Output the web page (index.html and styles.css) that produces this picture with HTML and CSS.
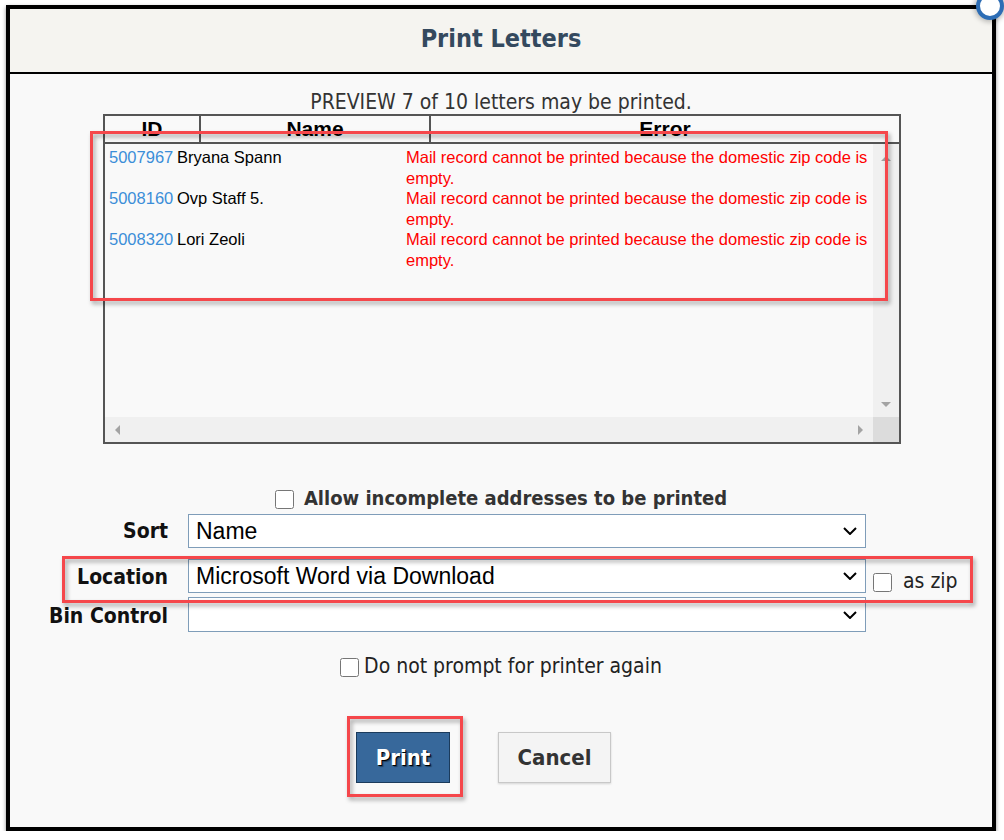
FILE: index.html
```html
<!DOCTYPE html>
<html lang="en">
<head>
  <meta charset="UTF-8">
  <meta name="viewport" content="width=device-width, initial-scale=1.0">
  <title>Print Letters</title>
  <link rel="stylesheet" href="styles.css">
</head>
<body>
  <div class="dialog">
    <div class="dialog-header">
      <h1>Print Letters</h1>
    </div>

    <div class="dialog-body">
      <p class="preview-note">PREVIEW 7 of 10 letters may be printed.</p>

      <!-- Letters that cannot be printed -->
      <div class="letter-table">
        <div class="letter-head">
          <div class="col-id">ID</div>
          <div class="col-name">Name</div>
          <div class="col-error">Error</div>
        </div>
        <div class="letter-scroll">
          <div class="letter-rows">
            <div class="letter-row">
              <a class="letter-id">5007967</a>
              <span class="letter-name">Bryana Spann</span>
              <span class="letter-error">Mail record cannot be printed because the domestic zip code is empty.</span>
            </div>
            <div class="letter-row">
              <a class="letter-id">5008160</a>
              <span class="letter-name">Ovp Staff 5.</span>
              <span class="letter-error">Mail record cannot be printed because the domestic zip code is empty.</span>
            </div>
            <div class="letter-row">
              <a class="letter-id">5008320</a>
              <span class="letter-name">Lori Zeoli</span>
              <span class="letter-error">Mail record cannot be printed because the domestic zip code is empty.</span>
            </div>
          </div>
          <div class="vscroll"><i class="arrow-up"></i><i class="arrow-down"></i></div>
          <div class="hscroll"><i class="arrow-left"></i><i class="arrow-right"></i></div>
          <div class="scroll-corner"></div>
        </div>
      </div>

      <label class="check-line allow">
        <input type="checkbox">
        <span>Allow incomplete addresses to be printed</span>
      </label>

      <div class="form-row row-sort">
        <span class="form-label">Sort</span>
        <div class="fake-select">
          <span>Name</span>
          <svg class="chevron" width="14" height="8" viewBox="0 0 14 8"><polyline points="1,1 7,7 13,1" fill="none" stroke="#000" stroke-width="2"/></svg>
        </div>
      </div>

      <div class="form-row row-location">
        <span class="form-label">Location</span>
        <div class="fake-select">
          <span>Microsoft Word via Download</span>
          <svg class="chevron" width="14" height="8" viewBox="0 0 14 8"><polyline points="1,1 7,7 13,1" fill="none" stroke="#000" stroke-width="2"/></svg>
        </div>
        <input type="checkbox" class="zip-check">
        <span class="zip-text">as zip</span>
      </div>

      <div class="form-row row-bin">
        <span class="form-label">Bin Control</span>
        <div class="fake-select">
          <span></span>
          <svg class="chevron" width="14" height="8" viewBox="0 0 14 8"><polyline points="1,1 7,7 13,1" fill="none" stroke="#000" stroke-width="2"/></svg>
        </div>
      </div>

      <label class="check-line prompt">
        <input type="checkbox">
        <span>Do not prompt for printer again</span>
      </label>

      <div class="button-row">
        <button class="btn btn-print">Print</button>
        <button class="btn btn-cancel">Cancel</button>
      </div>
    </div>

    <!-- red annotation boxes from the screenshot -->
    <div class="mark mark-table"></div>
    <div class="mark mark-location"></div>
    <div class="mark mark-print"></div>
  </div>

  <div class="close-btn"></div>
</body>
</html>
```

FILE: styles.css
```css
:root {
  --frame: #000;
  --grid-line: #555;
  --mark-red: #f5474b;
  --tahoma: "DejaVu Sans Condensed", "DejaVu Sans", sans-serif;
  --arial: "Liberation Sans", Arial, sans-serif;
}

html, body {
  margin: 0;
  padding: 0;
  background: #fff;
}

body {
  font-family: var(--tahoma);
  font-stretch: condensed;
  position: relative;
}

.dialog {
  position: relative;
  width: 990px;
  margin: 5px 0 0 6px;
  box-sizing: border-box;
  border: 4px solid var(--frame);
  background: #f9f9f9;
  box-shadow: 0 2px 4px rgba(0, 0, 0, 0.45);
}

.dialog-header {
  height: 63px;
  background: #f5f4f0;
  border-bottom: 2px solid var(--frame);
  text-align: center;
}

.dialog-header h1 {
  margin: 0;
  font-size: 25px;
  line-height: 60px;
  font-weight: bold;
  color: #34495e;
}

.dialog-body {
  padding: 16px 0 44px;
}

.preview-note {
  margin: 0;
  text-align: center;
  font-size: 21px;
  line-height: 24px;
  color: #333;
}

/* Table */
.letter-table {
  margin-left: 93px;
  width: 798px;
  box-sizing: border-box;
  border: 2px solid var(--grid-line);
  font-family: var(--arial);
  font-stretch: normal;
}

.letter-head {
  display: flex;
  height: 26px;
  border-bottom: 2px solid var(--grid-line);
  font-weight: bold;
  font-size: 21px;
  line-height: 26px;
  color: #000;
  text-align: center;
}

.col-id {
  width: 94px;
  border-right: 2px solid var(--grid-line);
}

.col-name {
  width: 228px;
  border-right: 2px solid var(--grid-line);
}

.col-error {
  flex: 1;
}

.letter-scroll {
  display: grid;
  grid-template-columns: 1fr 26px;
  grid-template-rows: 273px 25px;
}

.letter-rows {
  padding: 3px 0 0 4px;
  font-size: 16.5px;
  line-height: 20.5px;
  overflow: hidden;
}

.letter-row {
  display: flex;
}

.letter-id {
  flex: none;
  width: 68px;
  color: #3b8ed8;
}

.letter-name {
  flex: none;
  width: 229px;
  color: #000;
}

.letter-error {
  flex: none;
  width: 466px;
  color: #f00;
}

.vscroll {
  background: #f0f0f0;
  display: flex;
  flex-direction: column;
  justify-content: space-between;
  align-items: center;
  padding: 12px 0 10px;
}

.hscroll {
  background: #f0f0f0;
  display: flex;
  justify-content: space-between;
  align-items: center;
  padding: 0 10px;
}

.scroll-corner {
  background: #dcdcdc;
}

.arrow-up, .arrow-down, .arrow-left, .arrow-right {
  width: 0;
  height: 0;
}

.arrow-up {
  border-left: 5px solid transparent;
  border-right: 5px solid transparent;
  border-bottom: 5px solid #a3a3a3;
}

.arrow-down {
  border-left: 5px solid transparent;
  border-right: 5px solid transparent;
  border-top: 5px solid #a3a3a3;
}

.arrow-left {
  border-top: 5px solid transparent;
  border-bottom: 5px solid transparent;
  border-right: 5px solid #a3a3a3;
}

.arrow-right {
  border-top: 5px solid transparent;
  border-bottom: 5px solid transparent;
  border-left: 5px solid #a3a3a3;
}

/* Options */
input[type="checkbox"] {
  width: 19px;
  height: 19px;
  margin: 0;
  flex: none;
}

.check-line {
  display: flex;
  justify-content: center;
  align-items: center;
}

.check-line input {
  margin-top: 3px;
}

.allow {
  margin-top: 42px;
  gap: 10px;
  font-weight: bold;
  font-size: 20px;
  line-height: 24px;
  color: #333;
}

.prompt {
  margin-top: 22px;
  gap: 5px;
  font-size: 21px;
  line-height: 24px;
  color: #222;
}

.form-row {
  display: flex;
  align-items: center;
}

.row-sort { margin-top: 4px; }
.row-location { margin-top: 11px; }
.row-bin { margin-top: 4px; }

.form-label {
  width: 158px;
  margin-right: 20px;
  text-align: right;
  font-weight: bold;
  font-size: 21px;
  color: #111;
}

.row-location .form-label,
.row-bin .form-label {
  margin-top: 2px;
}

.fake-select {
  width: 678px;
  height: 34px;
  box-sizing: border-box;
  border: 1px solid #7f9db9;
  background: #fff;
  display: flex;
  align-items: center;
  justify-content: space-between;
  padding: 0 8px 0 7px;
  font-family: var(--arial);
  font-stretch: normal;
  font-size: 23px;
  color: #000;
}

.row-bin .fake-select {
  height: 35px;
}

.zip-check {
  align-self: flex-end;
  margin: 0 0 1px 7px !important;
}

.zip-text {
  align-self: flex-end;
  margin-left: 11px;
  font-size: 21px;
  line-height: 24px;
  color: #222;
}

/* Buttons */
.button-row {
  display: flex;
  justify-content: center;
  gap: 48px;
  margin-top: 54px;
  padding-right: 35px;
}

.btn {
  height: 51px;
  box-sizing: border-box;
  padding: 0;
  font-family: var(--tahoma);
  font-stretch: condensed;
  font-weight: bold;
  font-size: 22px;
}

.btn-print {
  width: 94px;
  background: #37689b;
  border: 1px solid #1b3b5c;
  color: #fff;
  text-shadow: 1px 1px 0 #000, 2px 2px 1px rgba(0, 0, 0, 0.4);
}

.btn-cancel {
  width: 113px;
  background: #f4f4f4;
  border: 1px solid #c8c8c8;
  color: #333;
  box-shadow: 0 1px 2px rgba(0, 0, 0, 0.15);
}

/* Annotation boxes */
.mark {
  position: absolute;
  box-sizing: border-box;
  border: 3px solid var(--mark-red);
  filter: drop-shadow(2px 3px 2px rgba(0, 0, 0, 0.35));
  pointer-events: none;
}

.mark-table { left: 80px; top: 122px; width: 798px; height: 170px; }
.mark-location { left: 52px; top: 547px; width: 911px; height: 47px; }
.mark-print { left: 337px; top: 707px; width: 116px; height: 81px; }

.close-btn {
  position: absolute;
  left: 976px;
  top: -8px;
  width: 20px;
  height: 20px;
  border-radius: 50%;
  background: #fff;
  border: 4px solid #2d6db5;
  box-shadow: 0 0 5px 2px rgba(0, 0, 0, 0.25);
}
```
